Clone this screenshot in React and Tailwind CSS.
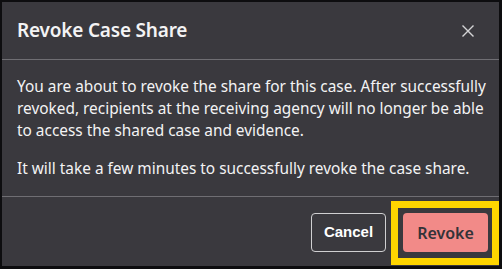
import React from "react";

export default function App() {
  return (
    <div className="w-[502px] h-[269px] bg-[#0d0d0f] pt-[2px] pl-[2px] pr-[3px] pb-[3px] overflow-hidden" style={{ fontFamily: '"Noto Sans", sans-serif' }}>
      <div className="relative w-full h-full bg-[#3a393e] flex flex-col text-[#f3f3f4]">
        <div className="h-[58px] flex items-center justify-between pl-[15px] pr-[25px] border-b border-[#6f6e73] shrink-0">
          <h1 className="text-[19px] font-semibold leading-none tracking-[-0.2px]">Revoke Case Share</h1>
          <svg width="12" height="12" viewBox="0 0 12 12" className="text-[#d4d4d6]">
            <path d="M1 1 L11 11 M11 1 L1 11" stroke="currentColor" strokeWidth="1.4" strokeLinecap="square" />
          </svg>
        </div>
        <div className="h-[137px] border-b border-[#6f6e73] pl-[15px] pr-[10px] pt-[16px] text-[15.4px] leading-[22px] shrink-0">
          <p>You are about to revoke the share for this case. After successfully revoked, recipients at the receiving agency will no longer be able to access the shared case and evidence.</p>
          <p className="mt-[16px]">It will take a few minutes to successfully revoke the case share.</p>
        </div>
        <div className="flex-1 flex items-start justify-end pt-[16px] pr-[11px] gap-[17px]">
          <button className="w-[75px] h-[39px] rounded-[4px] border border-[#cfcfd1] text-white text-[15px] font-bold" style={{ fontFamily: '"Liberation Sans", Arial, sans-serif' }}>Cancel</button>
          <div className="relative">
            <button className="w-[85px] h-[39px] rounded-[4px] bg-[#f28a88] text-[#343338] text-[16px] font-semibold">Revoke</button>
            <div className="absolute left-[-12px] top-[-12px] right-[-11px] bottom-[-13px] border-[7px] border-[#ffd600]"></div>
          </div>
        </div>
      </div>
    </div>
  );
}
